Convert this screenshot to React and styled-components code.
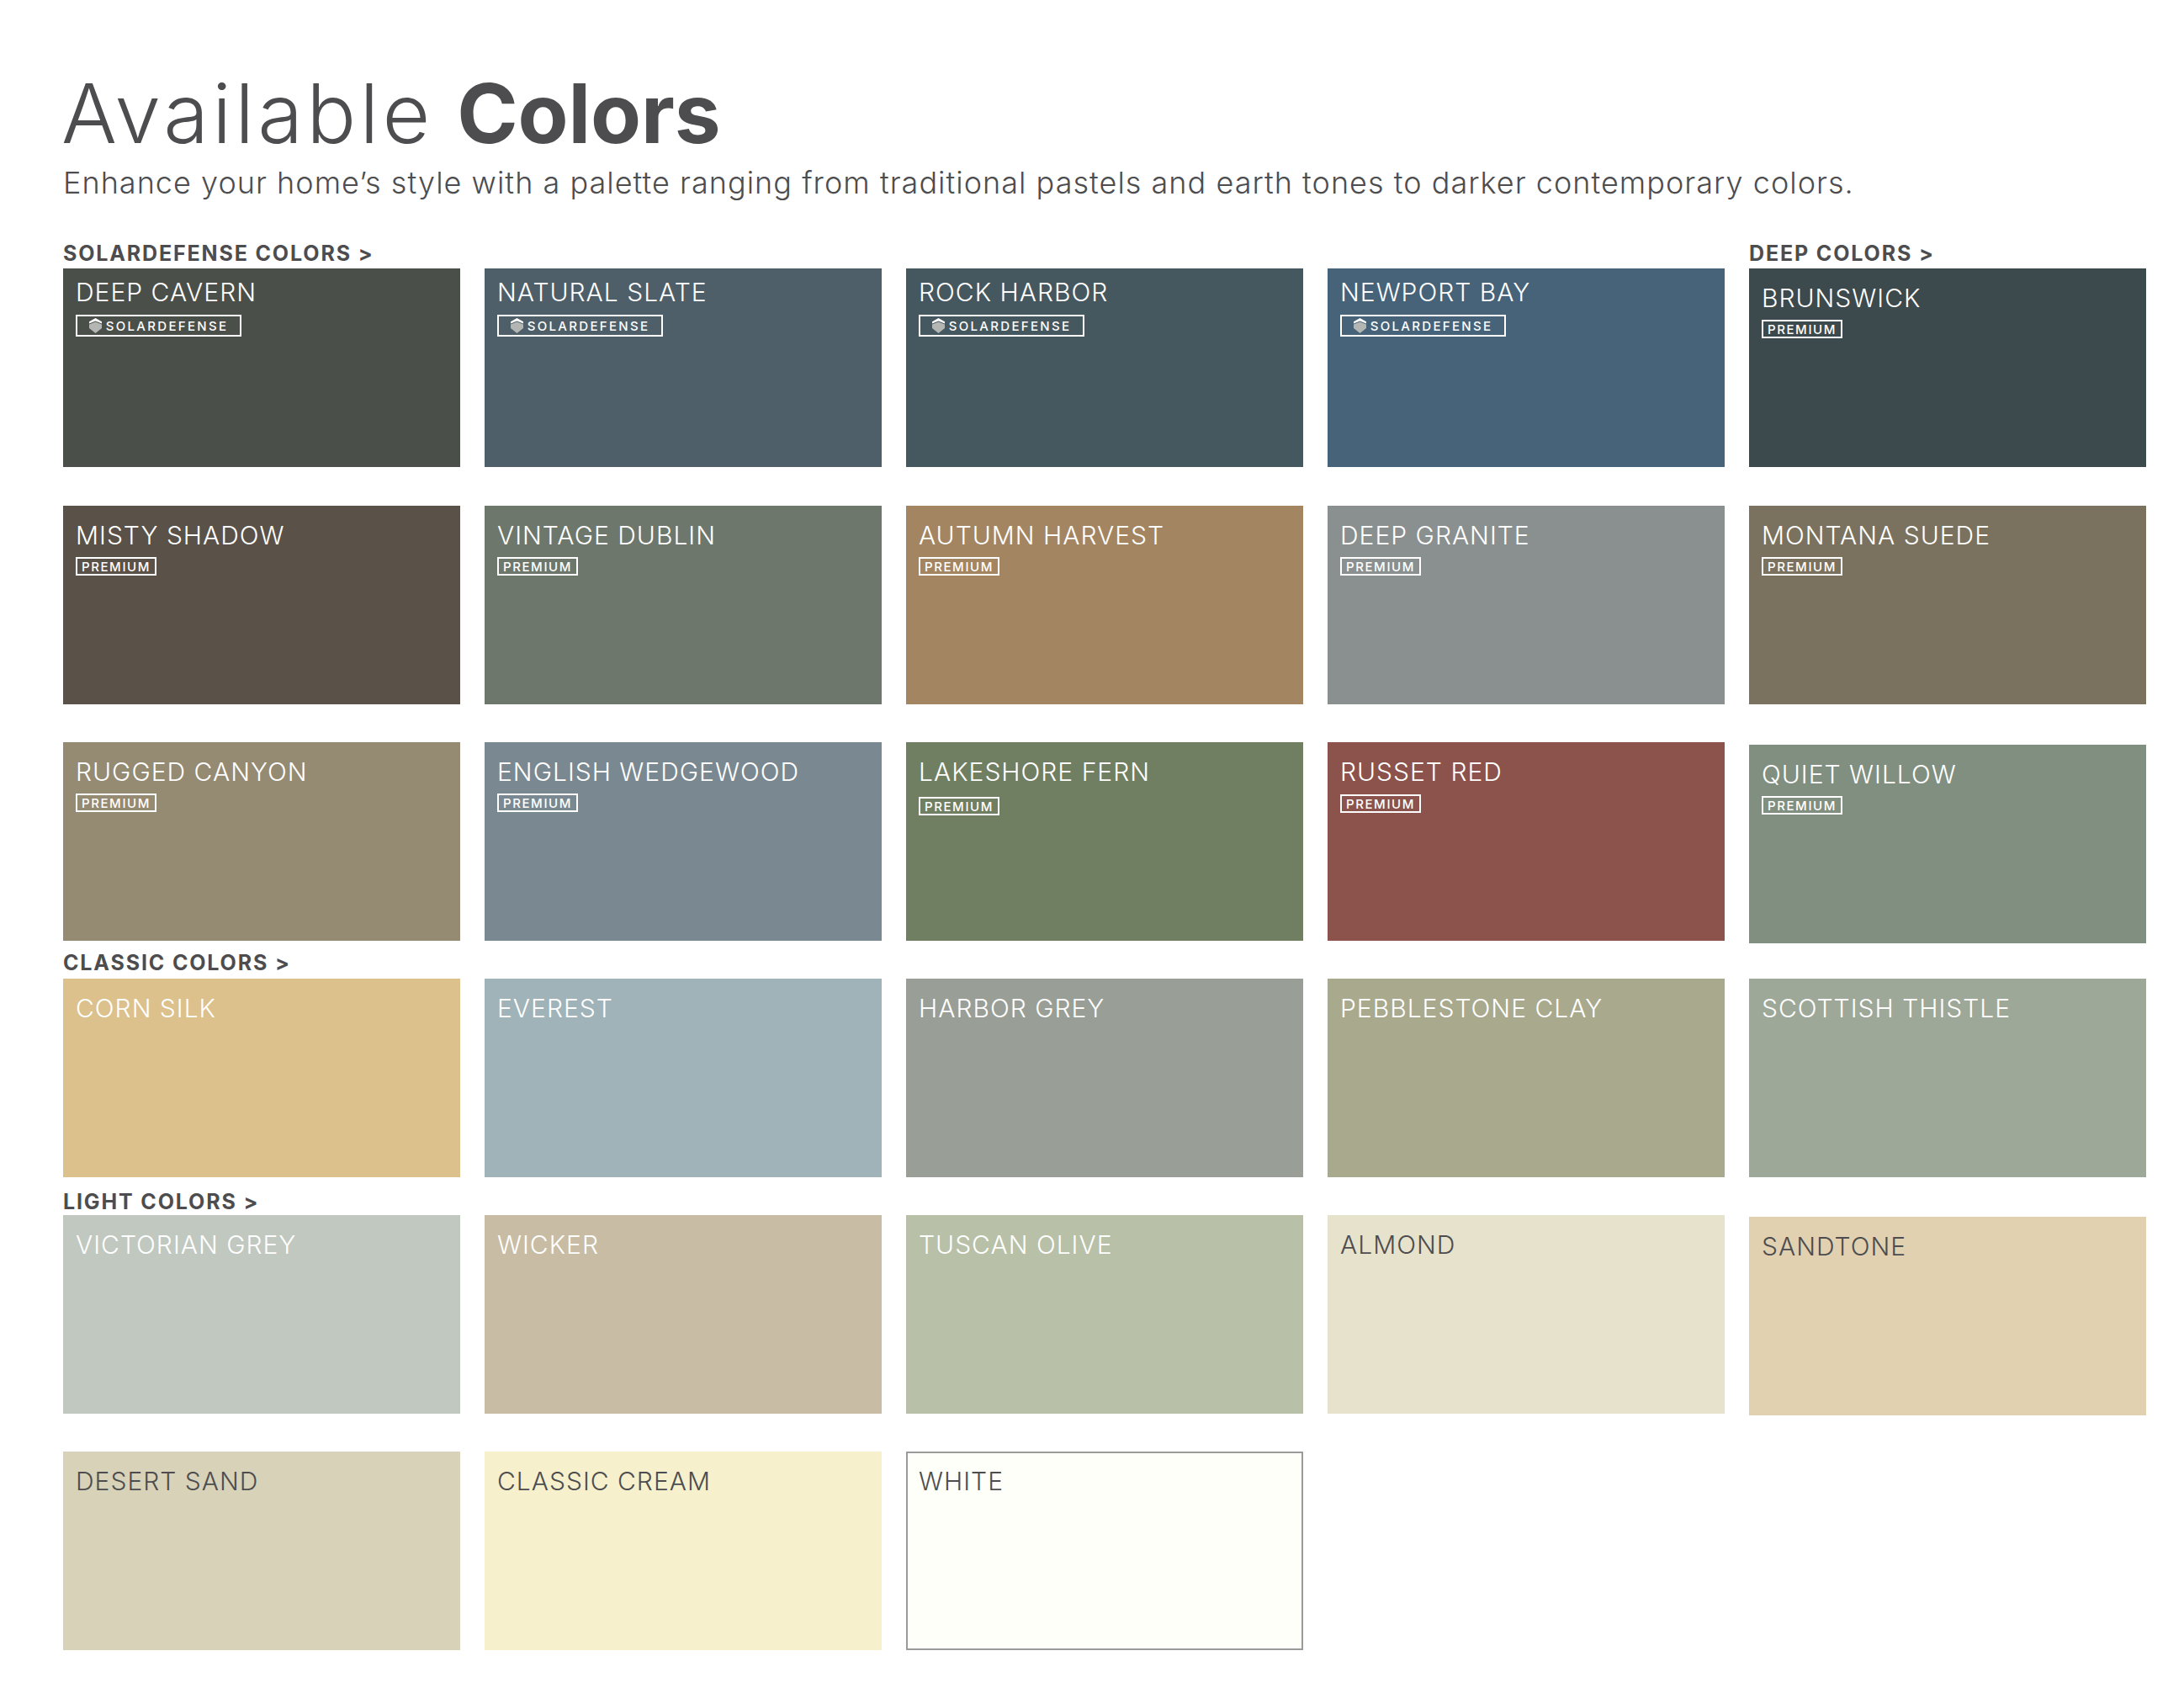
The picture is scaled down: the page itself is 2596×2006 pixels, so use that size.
import React from 'react';
import styled, { createGlobalStyle } from 'styled-components';

const rows = [
  [
    { name: 'DEEP CAVERN', color: '#4b4f4a', badge: 'solar' },
    { name: 'NATURAL SLATE', color: '#4e5f69', badge: 'solar' },
    { name: 'ROCK HARBOR', color: '#45585f', badge: 'solar' },
    { name: 'NEWPORT BAY', color: '#46637a', badge: 'solar' },
    { name: 'BRUNSWICK', color: '#3c494d', badge: 'premium' },
  ],
  [
    { name: 'MISTY SHADOW', color: '#5a5149', badge: 'premium' },
    { name: 'VINTAGE DUBLIN', color: '#6d776c', badge: 'premium' },
    { name: 'AUTUMN HARVEST', color: '#a38661', badge: 'premium' },
    { name: 'DEEP GRANITE', color: '#8a908f', badge: 'premium' },
    { name: 'MONTANA SUEDE', color: '#7a725e', badge: 'premium' },
  ],
  [
    { name: 'RUGGED CANYON', color: '#958a72', badge: 'premium' },
    { name: 'ENGLISH WEDGEWOOD', color: '#7a8991', badge: 'premium' },
    { name: 'LAKESHORE FERN', color: '#707f62', badge: 'premium', badgeGap: 4 },
    { name: 'RUSSET RED', color: '#8b534b', badge: 'premium', badgeGap: 1 },
    { name: 'QUIET WILLOW', color: '#818f80', badge: 'premium', drop: 3 },
  ],
  [
    { name: 'CORN SILK', color: '#dcc18c' },
    { name: 'EVEREST', color: '#a0b3b8' },
    { name: 'HARBOR GREY', color: '#999e96' },
    { name: 'PEBBLESTONE CLAY', color: '#a9a98e' },
    { name: 'SCOTTISH THISTLE', color: '#9ea898' },
  ],
  [
    { name: 'VICTORIAN GREY', color: '#c0c8c0' },
    { name: 'WICKER', color: '#c8bca4' },
    { name: 'TUSCAN OLIVE', color: '#b8c0a7' },
    { name: 'ALMOND', color: '#e7e2cc', dark: true },
    { name: 'SANDTONE', color: '#e1d1b1', dark: true, drop: 2 },
  ],
  [
    { name: 'DESERT SAND', color: '#d8d2b9', dark: true },
    { name: 'CLASSIC CREAM', color: '#f6f0cd', dark: true },
    { name: 'WHITE', color: '#fffffa', dark: true, outlined: true },
  ],
];

// band above each row of swatches, some carry a group label
const bands = [
  { height: 77, lift: 3, labels: [['SOLARDEFENSE COLORS >', 1], ['DEEP COLORS >', 5]] },
  { height: 46, labels: [] },
  { height: 45, labels: [] },
  { height: 45, lift: 4, labels: [['CLASSIC COLORS >', 1]] },
  { height: 45, lift: 1, labels: [['LIGHT COLORS >', 1]] },
  { height: 45, labels: [] },
];

const GlobalStyle = createGlobalStyle`
  body {
    margin: 0;
    background: #fff;
    font-family: 'Inter', 'Liberation Sans', sans-serif;
    color: #4d4d4f;
  }
`;

const Page = styled.div`
  width: 2596px;
  height: 2006px;
  box-sizing: border-box;
  padding: 77px 0 0 75px;
  overflow: hidden;
`;

const Title = styled.h1`
  margin: 0 0 0 -2px;
  font-size: 98px;
  line-height: 115px;
  font-weight: 300;
  letter-spacing: 4.15px;
  white-space: nowrap;
  b {
    margin-left: -4px;
    font-weight: 700;
    letter-spacing: -0.1px;
  }
`;

const Intro = styled.p`
  margin: 0;
  font-size: 36px;
  line-height: 50px;
  font-weight: 300;
  letter-spacing: 1.02px;
  white-space: nowrap;
`;

const Grid = styled.div`
  display: grid;
  grid-template-columns: repeat(5, 472px);
  column-gap: 29px;
`;

const LabelRow = styled(Grid)`
  height: ${p => p.$height}px;
  align-items: end;
`;

const GroupLabel = styled.div`
  grid-column: ${p => p.$column};
  font-size: 25px;
  line-height: 30px;
  font-weight: 700;
  letter-spacing: 1.85px;
  padding-bottom: ${p => p.$lift}px;
`;

const Swatch = styled.div`
  box-sizing: border-box;
  height: 236px;
  margin-top: ${p => p.$drop || 0}px;
  margin-bottom: ${p => -(p.$drop || 0)}px;
  padding: ${p => (p.$solar ? 10 : 17)}px 15px 0;
  background: ${p => p.$color};
  color: ${p => (p.$dark ? '#4d4d4f' : '#fff')};
  border: ${p => (p.$outlined ? '2px solid #9a9a9a' : 'none')};
  ${p => p.$outlined && 'padding: 15px 13px 0;'}
`;

const SwatchName = styled.div`
  font-size: 30px;
  line-height: 36px;
  font-weight: 300;
  letter-spacing: 1px;
`;

const Badge = styled.div`
  display: flex;
  align-items: center;
  justify-content: center;
  box-sizing: border-box;
  width: ${p => (p.$solar ? 197 : 96)}px;
  height: ${p => (p.$solar ? 26 : 22)}px;
  margin-top: ${p => (p.$solar ? 9 : 8) + (p.$gap || 0)}px;
  gap: 5px;
  border: 2px solid #fff;
  font-size: 15px;
  font-weight: 500;
  letter-spacing: ${p => (p.$solar ? 2.3 : 1.6)}px;
`;

const Shield = () => (
  <svg width="15" height="18" viewBox="0 0 15 18">
    <path d="M7.5 0 15 4.2V6.4L7.5 3.6 0 6.4V4.2Z" fill="#fff" />
    <path d="M7.5 4.6 15 7.6V12L7.5 18 0 12V7.6Z" fill="#b4b6b4" />
  </svg>
);

const Card = ({ item }) => {
  const solar = item.badge === 'solar';
  return (
    <Swatch $color={item.color} $dark={item.dark} $outlined={item.outlined} $solar={solar} $drop={item.drop}>
      <SwatchName>{item.name}</SwatchName>
      {solar && (
        <Badge $solar>
          <Shield />
          SOLARDEFENSE
        </Badge>
      )}
      {item.badge === 'premium' && <Badge $gap={item.badgeGap}>PREMIUM</Badge>}
    </Swatch>
  );
};

export default function App() {
  return (
    <Page>
      <GlobalStyle />
      <Title>
        Available <b>Colors</b>
      </Title>
      <Intro>Enhance your home’s style with a palette ranging from traditional pastels and earth tones to darker contemporary colors.</Intro>
      {rows.map((row, i) => (
        <React.Fragment key={i}>
          <LabelRow $height={bands[i].height}>
            {bands[i].labels.map(([text, column]) => (
              <GroupLabel key={text} $column={column} $lift={bands[i].lift}>
                {text}
              </GroupLabel>
            ))}
          </LabelRow>
          <Grid>
            {row.map(item => (
              <Card key={item.name} item={item} />
            ))}
          </Grid>
        </React.Fragment>
      ))}
    </Page>
  );
}
